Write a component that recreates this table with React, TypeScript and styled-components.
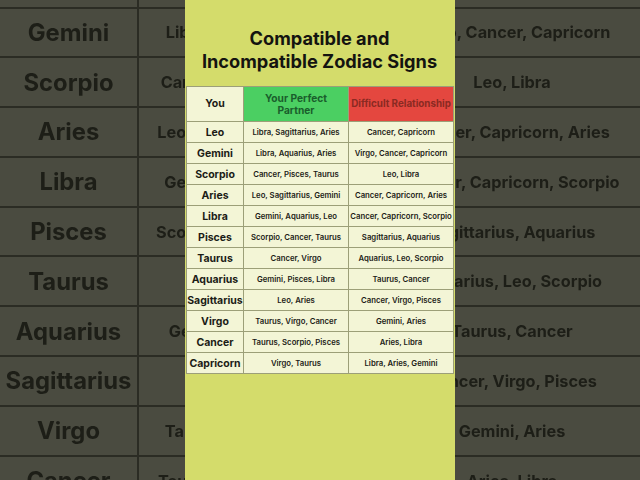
import React from "react";
import styled, { createGlobalStyle } from "styled-components";

const GlobalStyle = createGlobalStyle`
  html, body {
    margin: 0;
    padding: 0;
    overflow: hidden;
  }
  body {
    font-family: Inter, "Noto Sans", "Liberation Sans", sans-serif;
  }
`;

type Sign = { name: string; partner: string; difficult: string };

const signs: Sign[] = [
  { name: "Leo", partner: "Libra, Sagittarius, Aries", difficult: "Cancer, Capricorn" },
  { name: "Gemini", partner: "Libra, Aquarius, Aries", difficult: "Virgo, Cancer, Capricorn" },
  { name: "Scorpio", partner: "Cancer, Pisces, Taurus", difficult: "Leo, Libra" },
  { name: "Aries", partner: "Leo, Sagittarius, Gemini", difficult: "Cancer, Capricorn, Aries" },
  { name: "Libra", partner: "Gemini, Aquarius, Leo", difficult: "Cancer, Capricorn, Scorpio" },
  { name: "Pisces", partner: "Scorpio, Cancer, Taurus", difficult: "Sagittarius, Aquarius" },
  { name: "Taurus", partner: "Cancer, Virgo", difficult: "Aquarius, Leo, Scorpio" },
  { name: "Aquarius", partner: "Gemini, Pisces, Libra", difficult: "Taurus, Cancer" },
  { name: "Sagittarius", partner: "Leo, Aries", difficult: "Cancer, Virgo, Pisces" },
  { name: "Virgo", partner: "Taurus, Virgo, Cancer", difficult: "Gemini, Aries" },
  { name: "Cancer", partner: "Taurus, Scorpio, Pisces", difficult: "Aries, Libra" },
  { name: "Capricorn", partner: "Virgo, Taurus", difficult: "Libra, Aries, Gemini" },
];

const Stage = styled.div`
  position: relative;
  width: 640px;
  height: 480px;
  overflow: hidden;
  background: #4a4b40;
  display: flex;
  justify-content: center;
`;

/* blurred, zoomed copy of the table sitting behind the card */
const Backdrop = styled.div`
  position: absolute;
  top: -41.3px;
  left: 0;
  display: grid;
  grid-template-columns: 139px 225px 296px;
  grid-auto-rows: 49.8px;
  color: #1d1e17;
  filter: blur(0.4px);
`;

const BackCell = styled.div<{ $first?: boolean }>`
  display: flex;
  align-items: center;
  justify-content: center;
  white-space: nowrap;
  font-weight: 700;
  font-size: ${(p) => (p.$first ? "23.8px" : "16.3px")};
  border-bottom: 2px solid #2b2c24;
  border-right: ${(p) => (p.$first ? "2px solid #2b2c24" : "none")};
  box-sizing: border-box;
`;

const Card = styled.div`
  position: relative;
  z-index: 1;
  width: 270px;
  height: 480px;
  box-sizing: border-box;
  padding: 27px 2px 0 1px;
  background: #d4dc6b;
  display: flex;
  flex-direction: column;
`;

const Title = styled.h1`
  margin: 0 0 13px;
  text-align: center;
  font-size: 18.2px;
  line-height: 23px;
  font-weight: 700;
  color: #141410;
`;

const Table = styled.table`
  width: 267px;
  border-collapse: collapse;
  table-layout: fixed;
`;

const HeadCell = styled.th<{ $tone: "plain" | "good" | "bad" }>`
  height: 34px;
  padding: 0 1px;
  border: 1px solid #9c9f78;
  font-weight: 700;
  font-size: ${(p) =>
    p.$tone === "plain" ? "10.5px" : p.$tone === "good" ? "10.2px" : "9.8px"};
  line-height: 12.5px;
  text-align: center;
  white-space: ${(p) => (p.$tone === "bad" ? "nowrap" : "normal")};
  background: ${(p) =>
    p.$tone === "good" ? "#4bcf62" : p.$tone === "bad" ? "#e4473f" : "#f3f5d6"};
  color: ${(p) =>
    p.$tone === "good" ? "#1a5e2c" : p.$tone === "bad" ? "#8a2a22" : "#1c1c16"};
`;

const NameCell = styled.td`
  height: 20px;
  padding: 0;
  border: 1px solid #9c9f78;
  background: #f3f5d6;
  text-align: center;
  font-size: 10.5px;
  font-weight: 700;
  color: #1c1c16;
  white-space: nowrap;
`;

const ListCell = styled(NameCell)`
  font-size: 7.75px;
  font-weight: 600;
`;

export default function App() {
  return (
    <>
      <GlobalStyle />
      <Stage>
        <Backdrop>
          {signs.map((s) => (
            <React.Fragment key={s.name}>
              <BackCell $first>{s.name}</BackCell>
              <BackCell>{s.partner}</BackCell>
              <BackCell>{s.difficult}</BackCell>
            </React.Fragment>
          ))}
        </Backdrop>
        <Card>
          <Title>
            Compatible and
            <br />
            Incompatible Zodiac Signs
          </Title>
          <Table>
            <colgroup>
              <col style={{ width: 57 }} />
              <col style={{ width: 105 }} />
              <col style={{ width: 105 }} />
            </colgroup>
            <thead>
              <tr>
                <HeadCell $tone="plain">You</HeadCell>
                <HeadCell $tone="good">
                  Your Perfect
                  <br />
                  Partner
                </HeadCell>
                <HeadCell $tone="bad">Difficult Relationship</HeadCell>
              </tr>
            </thead>
            <tbody>
              {signs.map((s) => (
                <tr key={s.name}>
                  <NameCell>{s.name}</NameCell>
                  <ListCell>{s.partner}</ListCell>
                  <ListCell>{s.difficult}</ListCell>
                </tr>
              ))}
            </tbody>
          </Table>
        </Card>
      </Stage>
    </>
  );
}
